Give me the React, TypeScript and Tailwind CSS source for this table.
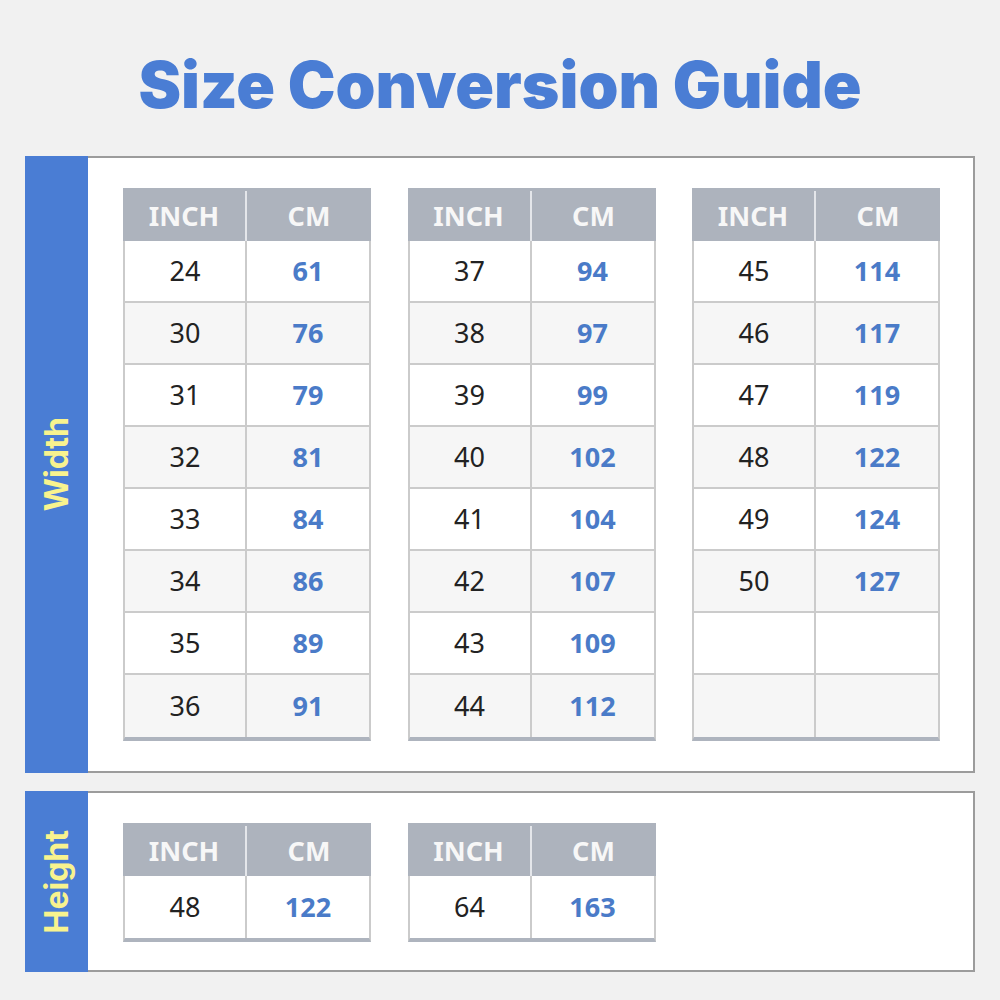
import React from "react";

type Row = [string, string];

const widthTables: Row[][] = [
  [["24", "61"], ["30", "76"], ["31", "79"], ["32", "81"], ["33", "84"], ["34", "86"], ["35", "89"], ["36", "91"]],
  [["37", "94"], ["38", "97"], ["39", "99"], ["40", "102"], ["41", "104"], ["42", "107"], ["43", "109"], ["44", "112"]],
  [["45", "114"], ["46", "117"], ["47", "119"], ["48", "122"], ["49", "124"], ["50", "127"], ["", ""], ["", ""]],
];

const heightTables: Row[][] = [[["48", "122"]], [["64", "163"]]];

const SizeTable = ({ rows }: { rows: Row[] }) => {
  return (
    <div className="w-[248px] flex flex-col">
      <div className="grid grid-cols-2 h-[53px] pt-[3px] bg-[#adb3bd] text-[#f7f7f7] text-[27px] font-bold">
        <div className="flex items-center justify-center border-r-2 border-[#e4e6ea]">INCH</div>
        <div className="flex items-center justify-center">CM</div>
      </div>
      <div className="border-x-2 border-[#cbcbcb] border-b-4 border-b-[#aeb4be]">
        {rows.map((r, i) => (
          <div
            key={i}
            className={
              "grid grid-cols-2 h-[62px] text-[27px] " +
              (i % 2 === 1 ? "bg-[#f6f6f6] " : "bg-white ") +
              (i < rows.length - 1 ? "border-b-2 border-[#cbcbcb]" : "")
            }
          >
            <div className="flex items-center justify-center border-r-2 border-[#cbcbcb] text-[#222222]">{r[0]}</div>
            <div className="flex items-center justify-center font-bold text-[#4a7bc8]">{r[1]}</div>
          </div>
        ))}
      </div>
    </div>
  );
};

const SideLabel = ({ label }: { label: string }) => (
  <div className="w-[63px] shrink-0 bg-[#4a7dd4] flex items-center justify-center">
    <span
      className="text-[32px] font-bold text-[#f8f38e] rotate-180 [writing-mode:vertical-rl] leading-none"
      style={{ fontFamily: "Inter, sans-serif" }}
    >
      {label}
    </span>
  </div>
);

export default function App() {
  return (
    <div
      className="w-[1000px] h-[1000px] bg-[#f1f1f1] flex flex-col items-center"
      style={{ fontFamily: '"Noto Sans", "Open Sans", sans-serif' }}
    >
      <h1
        className="h-[156px] flex items-center pt-[14px] text-[64px] font-black text-[#4a7dd4]"
        style={{ fontFamily: "Inter, sans-serif" }}
      >
        Size Conversion Guide
      </h1>

      <div className="w-[950px] h-[617px] flex">
        <SideLabel label="Width" />
        <div className="flex-1 bg-white border-2 border-l-0 border-[#9c9c9c] pt-[30px] pl-[35px] flex gap-[36.5px]">
          {widthTables.map((t, i) => (
            <SizeTable key={i} rows={t} />
          ))}
        </div>
      </div>

      <div className="w-[950px] h-[181px] mt-[18px] flex">
        <SideLabel label="Height" />
        <div className="flex-1 bg-white border-2 border-l-0 border-[#9c9c9c] pt-[30px] pl-[35px] flex gap-[36.5px]">
          {heightTables.map((t, i) => (
            <SizeTable key={i} rows={t} />
          ))}
        </div>
      </div>
    </div>
  );
}
